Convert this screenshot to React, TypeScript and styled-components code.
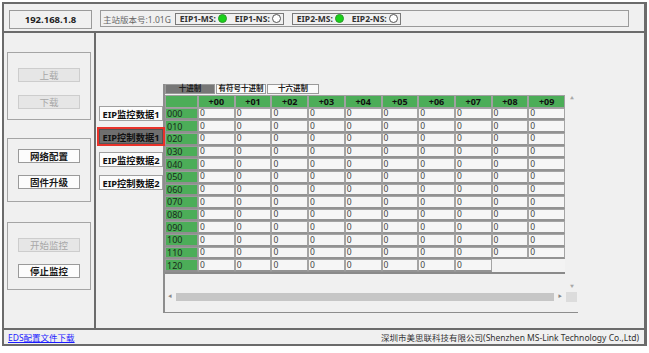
import React from "react";
import styled, { createGlobalStyle } from "styled-components";

const GlobalStyle = createGlobalStyle`
  body {
    margin: 0;
    background: #ffffff;
    font-family: "Noto Sans", "Noto Sans CJK SC", sans-serif;
  }
  * { box-sizing: border-box; }
`;

const Frame = styled.div`
  margin: 2px 0 0 2px;
  width: 645px;
  height: 344px;
  border: 2px solid #6b6b6b;
  border-right-width: 3px;
  background: #f0f0f0;
  display: flex;
  flex-direction: column;
`;

const TopBar = styled.div`
  height: 29px;
  border-bottom: 2px solid #6b6b6b;
  display: flex;
  align-items: flex-start;
  gap: 8px;
  padding: 6px 0 0 5px;
`;

const IpBox = styled.div`
  width: 83px;
  height: 19px;
  border: 1px solid #9a9a9a;
  display: flex;
  align-items: center;
  justify-content: center;
  font-size: 9.5px;
  font-weight: 700;
  color: #222;
`;

const VersionBox = styled.div`
  width: 529px;
  height: 17px;
  border: 1px solid #9a9a9a;
  display: flex;
  align-items: center;
  padding-left: 2px;
  gap: 4px;
  font-size: 8.5px;
  color: #666;
`;

const LedGroup = styled.div<{ $ml?: number }>`
  height: 12px;
  border: 1px solid #7a7a7a;
  display: flex;
  align-items: center;
  gap: 2px;
  padding: 0 2px 0 4px;
  font-size: 8.5px;
  font-weight: 700;
  color: #333;
  margin-left: ${(p) => p.$ml ?? 0}px;
`;

const Led = styled.span<{ $on?: boolean }>`
  display: inline-block;
  width: 9px;
  height: 9px;
  border-radius: 50%;
  background: ${(p) => (p.$on ? "#19d219" : "#ffffff")};
  border: 1px solid ${(p) => (p.$on ? "#2a9a2a" : "#555")};
  margin-right: ${(p) => (p.$on ? 6 : 0)}px;
`;

const Middle = styled.div`
  flex: 1;
  display: flex;
  min-height: 0;
`;

const LeftPanel = styled.div`
  width: 92px;
  border-right: 2px solid #6b6b6b;
  padding: 19px 0 0 3px;
  display: flex;
  flex-direction: column;
`;

const Group = styled.div<{ $h: number; $pt: number; $gap: number; $mb: number }>`
  width: 84px;
  height: ${(p) => p.$h}px;
  border: 1px solid #a5a5a5;
  display: flex;
  flex-direction: column;
  align-items: center;
  padding-top: ${(p) => p.$pt}px;
  gap: ${(p) => p.$gap}px;
  margin-bottom: ${(p) => p.$mb}px;
`;

const Btn = styled.div<{ $disabled?: boolean }>`
  width: 62px;
  height: 14px;
  border: 1px solid ${(p) => (p.$disabled ? "#cdcdcd" : "#9a9a9a")};
  background: ${(p) => (p.$disabled ? "#e6e6e6" : "#fcfcfc")};
  color: ${(p) => (p.$disabled ? "#a8a8a8" : "#1a1a1a")};
  font-size: 9.5px;
  font-weight: ${(p) => (p.$disabled ? 400 : 700)};
  display: flex;
  align-items: center;
  justify-content: center;
`;

const RightPanel = styled.div`
  flex: 1;
  display: flex;
  align-items: flex-start;
  padding-left: 3px;
`;

const DataBtns = styled.div`
  margin-top: 73px;
  width: 64px;
  display: flex;
  flex-direction: column;
  gap: 8px;
`;

const DataBtn = styled.div<{ $active?: boolean }>`
  height: 15px;
  border: 1px solid ${(p) => (p.$active ? "#555" : "#a0a0a0")};
  background: ${(p) => (p.$active ? "#6f6f6f" : "#fcfcfc")};
  outline: ${(p) => (p.$active ? "2px solid #e8322a" : "none")};
  color: #111;
  font-size: 9.3px;
  font-weight: 700;
  display: flex;
  align-items: center;
  justify-content: center;
  white-space: nowrap;
  position: relative;
  z-index: ${(p) => (p.$active ? 2 : 0)};
`;

const TableBox = styled.div`
  margin-top: 51px;
  width: 415px;
  height: 229px;
  border-left: 2px solid #8d8d8d;
  border-bottom: 1px solid #8d8d8d;
  display: grid;
  grid-template-columns: 400px 13px;
  grid-template-rows: 11px 179px 18px 9px;
`;

const Tabs = styled.div`
  grid-column: 1 / 3;
  display: flex;
  gap: 1px;
  align-items: flex-start;
`;

const Tab = styled.div<{ $w: number; $active?: boolean }>`
  width: ${(p) => p.$w}px;
  height: 10px;
  border: 1px solid #9a9a9a;
  background: ${(p) => (p.$active ? "#777" : "#fafafa")};
  color: #222;
  font-size: 7.5px;
  font-weight: 700;
  line-height: 1;
  display: flex;
  align-items: center;
  justify-content: center;
`;

const Grid = styled.div`
  display: grid;
  grid-template-columns: 33px repeat(10, minmax(0, 1fr));
  grid-template-rows: repeat(14, minmax(0, 1fr));
  background: #f3f3f3;
  border-bottom: 2px solid #8a8a8a;
  min-height: 0;
  overflow: hidden;
  line-height: 1;
`;

const Head = styled.div`
  background: #4cad58;
  border: 1px solid #a0a0a0;
  display: flex;
  align-items: center;
  justify-content: center;
  font-size: 9px;
  font-weight: 700;
  color: #111;
  min-height: 0;
`;

const Label = styled.div`
  background: #4cad58;
  border: 1px solid #9a9a9a;
  border-bottom: 2px solid #8f8f8f;
  font-size: 9px;
  color: #1a2a1a;
  display: flex;
  align-items: center;
  padding-left: 1px;
  min-height: 0;
`;

const Cell = styled.div`
  background: #f6f6f6;
  border: 1px solid #a4a4a4;
  border-bottom: 2px solid #939393;
  font-size: 8.5px;
  color: #444;
  display: flex;
  align-items: center;
  padding-left: 1px;
  min-height: 0;
`;

const VScroll = styled.div`
  grid-column: 2;
  grid-row: 2 / 4;
  display: flex;
  flex-direction: column;
  justify-content: space-between;
  align-items: center;
  padding: 2px 0 3px 1px;
  font-size: 4px;
  line-height: 1;
  color: #a8a8a8;
`;

const HScroll = styled.div`
  grid-column: 1;
  grid-row: 4;
  display: flex;
  align-items: center;
  padding-left: 3px;
  gap: 4px;
  font-size: 4px;
  line-height: 1;
  color: #888;
`;

const Thumb = styled.div`
  width: 378px;
  height: 8px;
  background: #c6c6c6;
`;

const Corner = styled.div`
  grid-column: 2;
  grid-row: 4;
  width: 11px;
  height: 10px;
  margin-left: 1px;
  background: #dcdcdc;
`;

const BottomBar = styled.div`
  height: 16px;
  border-top: 2px solid #6b6b6b;
  display: flex;
  align-items: center;
  justify-content: space-between;
  padding: 0 5px 0 4px;
  font-size: 8.5px;
`;

const Link = styled.a`
  color: #1b1bff;
  text-decoration: underline;
`;

const Company = styled.span`
  color: #333;
`;

const cols = ["+00", "+01", "+02", "+03", "+04", "+05", "+06", "+07", "+08", "+09"];
const rows = ["000", "010", "020", "030", "040", "050", "060", "070", "080", "090", "100", "110", "120"];

export default function App() {
  return (
    <>
      <GlobalStyle />
      <Frame>
        <TopBar>
          <IpBox>192.168.1.8</IpBox>
          <VersionBox>
            <span>主站版本号:1.01G</span>
            <LedGroup>
              EIP1-MS:<Led $on />EIP1-NS:<Led />
            </LedGroup>
            <LedGroup $ml={4}>
              EIP2-MS:<Led $on />EIP2-NS:<Led />
            </LedGroup>
          </VersionBox>
        </TopBar>
        <Middle>
          <LeftPanel>
            <Group $h={68} $pt={15} $gap={13} $mb={18}>
              <Btn $disabled>上载</Btn>
              <Btn $disabled>下载</Btn>
            </Group>
            <Group $h={64} $pt={10} $gap={12} $mb={20}>
              <Btn>网络配置</Btn>
              <Btn>固件升级</Btn>
            </Group>
            <Group $h={68} $pt={15} $gap={12} $mb={0}>
              <Btn $disabled>开始监控</Btn>
              <Btn>停止监控</Btn>
            </Group>
          </LeftPanel>
          <RightPanel>
            <DataBtns>
              <DataBtn>EIP监控数据1</DataBtn>
              <DataBtn $active>EIP控制数据1</DataBtn>
              <DataBtn>EIP监控数据2</DataBtn>
              <DataBtn>EIP控制数据2</DataBtn>
            </DataBtns>
            <TableBox>
              <Tabs>
                <Tab $w={50} $active>十进制</Tab>
                <Tab $w={50}>有符号十进制</Tab>
                <Tab $w={52}>十六进制</Tab>
              </Tabs>
              <Grid>
                <Head />
                {cols.map((c) => (
                  <Head key={c}>{c}</Head>
                ))}
                {rows.map((r, ri) => (
                  <React.Fragment key={r}>
                    <Label>{r}</Label>
                    {cols.map((c, ci) =>
                      ri === rows.length - 1 && ci >= 8 ? (
                        <div key={c} />
                      ) : (
                        <Cell key={c}>0</Cell>
                      )
                    )}
                  </React.Fragment>
                ))}
              </Grid>
              <VScroll>
                <span>▲</span>
                <span>▼</span>
              </VScroll>
              <HScroll>
                <span>◀</span>
                <Thumb />
                <span>▶</span>
              </HScroll>
              <Corner />
            </TableBox>
          </RightPanel>
        </Middle>
        <BottomBar>
          <Link href="#">EDS配置文件下载</Link>
          <Company>深圳市美思联科技有限公司(Shenzhen MS-Link Technology Co.,Ltd)</Company>
        </BottomBar>
      </Frame>
    </>
  );
}
